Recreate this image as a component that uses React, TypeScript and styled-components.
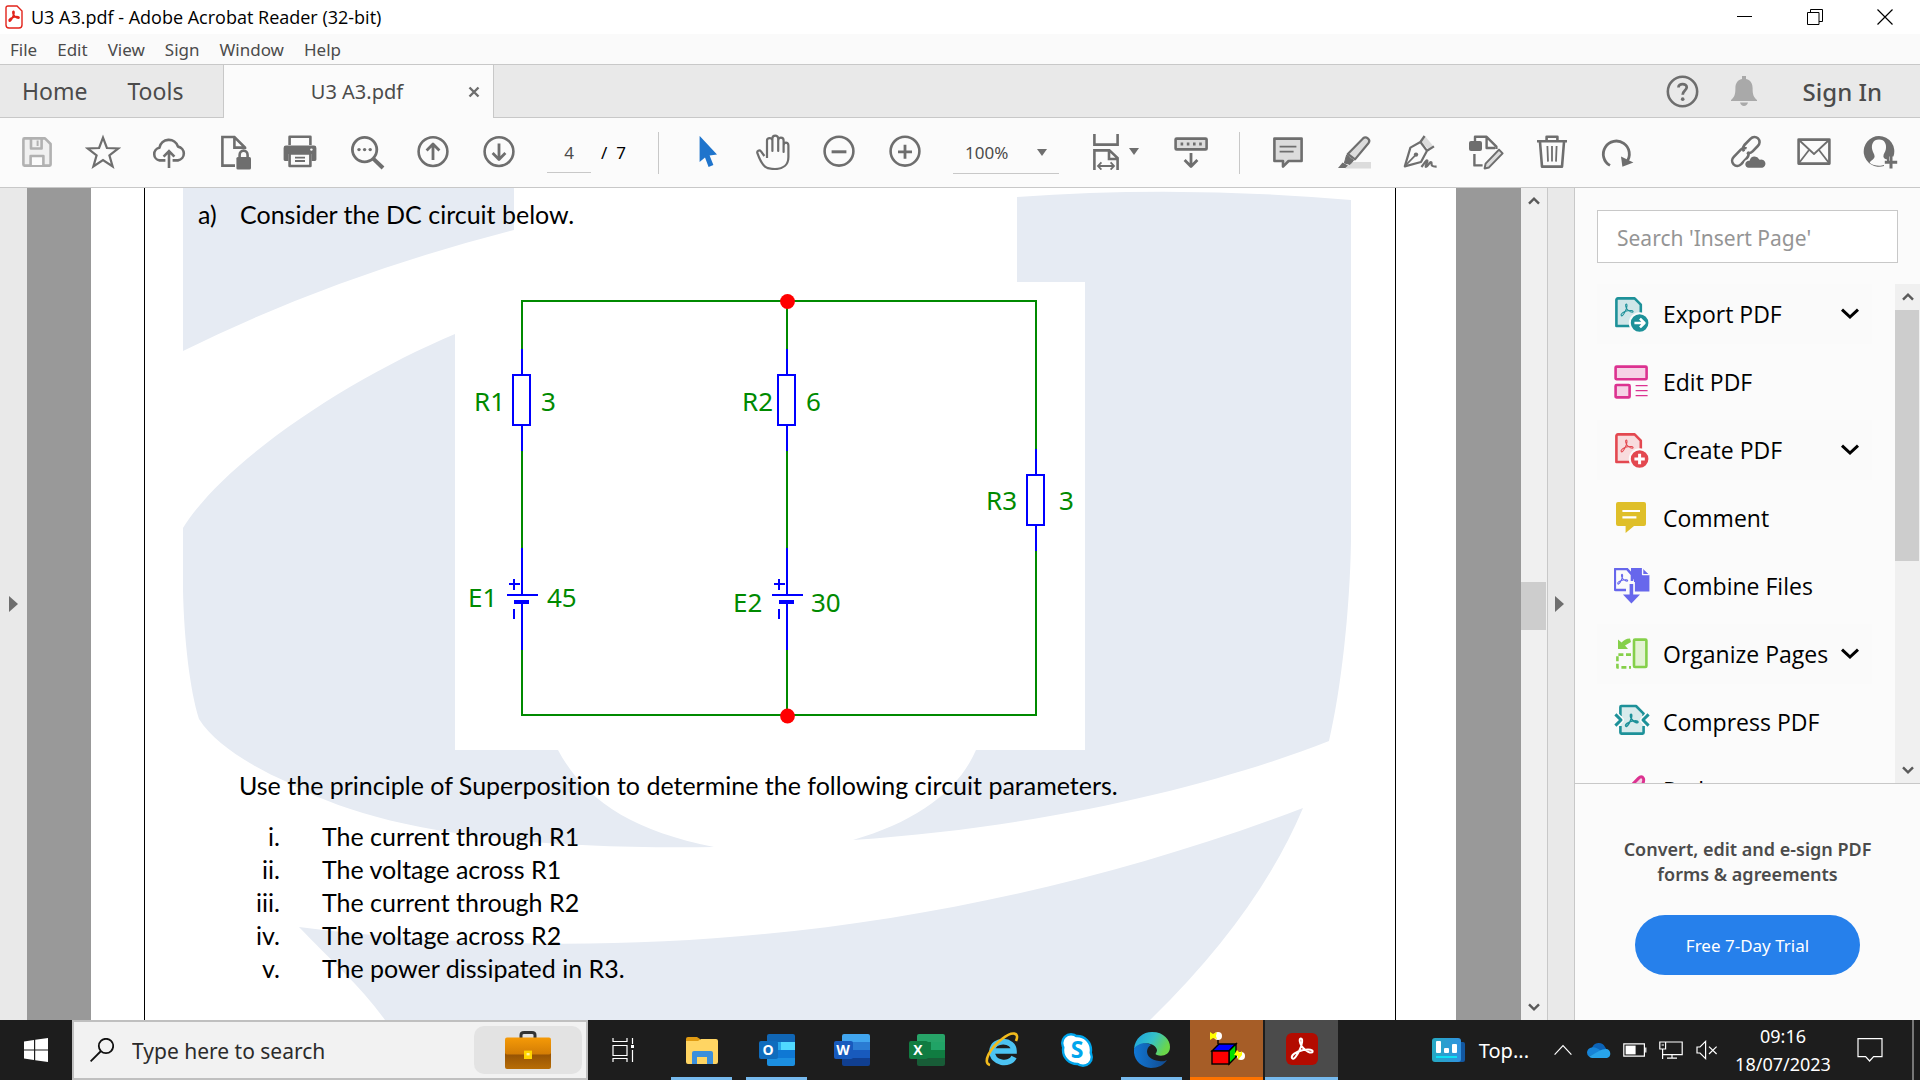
import React from "react";
import styled, { createGlobalStyle } from "styled-components";

const UI = `"Noto Sans", "Open Sans", sans-serif`;
const UI_NARROW = `"Open Sans", "Noto Sans", sans-serif`;
const DOC = `Lato, "Noto Sans", sans-serif`;
const INK = "#6e6e6e";
const LINE = "#c8c8c8";

const Global = createGlobalStyle`
  * { box-sizing: border-box; }
  body { margin: 0; font-family: ${UI}; color: #000; }
  button, input, select { font-family: inherit; color: inherit; margin: 0; }
  button { background: none; border: 0; padding: 0; cursor: pointer; }
  svg { display: block; flex: none; }
`;

const Desktop = styled.div`
  height: 100vh;
  display: flex;
  flex-direction: column;
  overflow: hidden;
  background: #fbfbfb;
`;

/* ---------- window chrome ---------- */
const TitleBar = styled.header`
  height: 34px;
  flex: none;
  display: flex;
  align-items: center;
  padding-left: 5px;
  background: #fff;
`;
const WindowTitle = styled.h1`
  margin: 0;
  padding-left: 8px;
  flex: 1;
  font-family: ${UI_NARROW};
  font-size: 18px;
  font-weight: 400;
`;
const WindowButton = styled.button`
  width: 70px;
  height: 34px;
  display: grid;
  place-items: center;
`;
const MenuBar = styled.nav`
  height: 31px;
  flex: none;
  display: flex;
  align-items: center;
  gap: 20px;
  padding: 0 10px;
  background: #fafafa;
  border-bottom: 1px solid ${LINE};
`;
const MenuItem = styled.button`
  font-size: 17px;
  color: #4b4b4b;
`;
const TabBar = styled.div`
  height: 53px;
  flex: none;
  display: flex;
  background: #e9e9e9;
  color: #4b4b4b;
`;
const HomeTabs = styled.div`
  width: 223px;
  display: flex;
  align-items: center;
  gap: 40px;
  padding-left: 22px;
  border-bottom: 1px solid ${LINE};
`;
const TabLink = styled.button`
  font-size: 23px;
`;
const ActiveTab = styled.div`
  width: 271px;
  display: flex;
  align-items: center;
  padding-right: 13px;
  background: #fbfbfb;
  border-left: 1px solid ${LINE};
  border-right: 1px solid ${LINE};
`;
const ActiveTabName = styled.span`
  flex: 1;
  padding-left: 22px;
  text-align: center;
  font-size: 20px;
`;
const Account = styled.div`
  flex: 1;
  display: flex;
  justify-content: flex-end;
  align-items: center;
  gap: 32px;
  padding-right: 38px;
  border-bottom: 1px solid ${LINE};
`;
const SignIn = styled.button`
  margin-left: 14px;
  font-size: 24px;
  font-weight: 500;
`;

/* ---------- toolbar ---------- */
const Toolbar = styled.div`
  height: 70px;
  flex: none;
  display: flex;
  align-items: center;
  padding: 0 7px 0 4px;
  border-bottom: 1px solid ${LINE};
  font-size: 17px;
`;
const Tool = styled.button`
  width: 66px;
  height: 60px;
  padding-bottom: 2px;
  display: flex;
  align-items: center;
  justify-content: center;
`;
const FitTool = styled(Tool)`
  width: 93px;
  padding-left: 27px;
  justify-content: flex-start;
  gap: 9px;
`;
const PageInput = styled.input`
  width: 44px;
  height: 40px;
  margin: 0 10px 0 15px;
  padding: 0;
  border: 0;
  border-bottom: 1px solid ${LINE};
  background: none;
  text-align: center;
  font-size: 17px;
  color: #4b4b4b;
`;
const PageTotal = styled.span`
  width: 42px;
  white-space: pre;
`;
const Rule = styled.span`
  width: 1px;
  height: 42px;
  margin: 0 15px;
  background: ${LINE};
`;
const ZoomBox = styled.label`
  width: 106px;
  height: 42px;
  margin: 0 6px 0 15px;
  display: flex;
  align-items: center;
  border-bottom: 1px solid ${LINE};
`;
const ZoomSelect = styled.select`
  appearance: none;
  flex: 1;
  padding: 0 0 0 12px;
  border: 0;
  background: none;
  font-size: 17px;
  color: #4b4b4b;
`;
const Caret = styled.span`
  border: 5px solid transparent;
  border-top: 7px solid ${INK};
  border-bottom: 0;
`;
const ZoomCaret = styled(Caret)`
  margin-right: 12px;
`;
const Spacer = styled.span`
  flex: 1;
`;

/* ---------- work area ---------- */
const Work = styled.main`
  flex: 1;
  min-height: 0;
  display: flex;
`;
const Strip = styled.button<{ $w: number }>`
  width: ${(p) => p.$w}px;
  flex: none;
  display: grid;
  place-items: center;
  background: #e9e9e9;
`;
const SideStrip = styled(Strip)`
  padding-right: 3px;
  border-left: 1px solid ${LINE};
  border-right: 1px solid ${LINE};
`;
const Pointer = styled.span`
  border: 8px solid transparent;
  border-left: 9px solid ${INK};
  border-right: 0;
`;
const Canvas = styled.section`
  flex: 1;
  min-width: 0;
  display: flex;
  padding: 0 65px 0 64px;
  background: #999;
`;
const Sheet = styled.article`
  position: relative;
  flex: 1;
  min-width: 0;
  overflow: hidden;
  padding: 0 60px 0 53px;
  background: #fff;
  font-family: ${DOC};
  font-size: 25px;
  font-variant-ligatures: none;
  line-height: 34px;
`;
const Watermark = styled.svg`
  position: absolute;
  left: 0;
  top: 0;
`;
const SheetBody = styled.div`
  position: relative;
  height: 100%;
  padding: 9px 0 0 53px;
  border-left: 1px solid #000;
  border-right: 1px solid #000;
`;
const Question = styled.p`
  margin: 0;
  display: flex;
`;
const QuestionMark = styled.span`
  width: 42px;
`;
const Figure = styled.figure`
  margin: 51px 0 18px 257px;
`;
const Prompt = styled.p`
  margin: 0 0 18px 41px;
`;
const Parts = styled.ol`
  margin: 0;
  padding: 0;
  list-style: none;
  line-height: 33px;
`;
const Part = styled.li`
  display: flex;
`;
const Numeral = styled.span`
  width: 82px;
  margin-right: 42px;
  text-align: right;
`;

const ScrollTrack = styled.div<{ $w: number }>`
  width: ${(p) => p.$w}px;
  flex: none;
  display: flex;
  flex-direction: column;
  background: #f0f0f0;
`;
const ScrollArrow = styled.button`
  height: 26px;
  flex: none;
  display: grid;
  place-items: center;
`;
const Thumb = styled.div<{ $h: number; $before: number }>`
  height: ${(p) => p.$h}px;
  margin: ${(p) => p.$before}px 1px auto 0;
  background: #cdcdcd;
`;

/* ---------- tool panel ---------- */
const Panel = styled.aside`
  width: 345px;
  flex: none;
  display: flex;
  flex-direction: column;
  background: #fbfbfb;
`;
const Search = styled.input`
  height: 53px;
  margin: 22px 22px 21px;
  padding: 2px 19px 0;
  border: 1px solid ${LINE};
  background: #fff;
  font-size: 21px;
  &::placeholder { color: #959595; opacity: 1; }
`;
const ToolList = styled.div`
  height: 500px;
  display: flex;
  border-bottom: 1px solid ${LINE};
`;
const ToolRows = styled.ul`
  flex: 1;
  margin: 0;
  padding: 0 23px 0 22px;
  display: flex;
  flex-direction: column;
  gap: 8px;
  list-style: none;
  overflow: hidden;
`;
const ToolRow = styled.button<{ $open?: boolean }>`
  width: 100%;
  height: 60px;
  display: flex;
  align-items: center;
  padding: 0 12px 0 17px;
  background: ${(p) => (p.$open ? "#fafafa" : "none")};
  font-family: ${UI_NARROW};
  font-size: 23px;
  text-align: left;
`;
const ToolName = styled.span`
  flex: 1;
  padding-left: 13px;
  white-space: nowrap;
`;
const Promo = styled.section`
  flex: 1;
  display: flex;
  flex-direction: column;
  align-items: center;
  padding-top: 53px;
  gap: 28px;
`;
const PromoText = styled.p`
  margin: 0;
  width: 300px;
  text-align: center;
  font-size: 18px;
  font-weight: 600;
  line-height: 25px;
  color: #4b4b4b;
`;
const Trial = styled.button`
  width: 225px;
  height: 60px;
  border-radius: 30px;
  background: #2680eb;
  color: #fff;
  font-size: 17px;
`;

/* ---------- taskbar ---------- */
const Taskbar = styled.footer`
  height: 60px;
  flex: none;
  display: flex;
  background: #1d1d1d;
  color: #fff;
`;
const TaskButton = styled.button`
  width: 72px;
  height: 60px;
  display: grid;
  place-items: center;
`;
const TaskSearch = styled.label`
  width: 516px;
  display: flex;
  align-items: center;
  padding: 0 4px 0 16px;
  border: 2px solid #c0c0c0;
  background: #f2f2f2;
`;
const TaskInput = styled.input`
  flex: 1;
  min-width: 0;
  padding: 2px 0 0 18px;
  border: 0;
  background: none;
  font-size: 21px;
  &::placeholder { color: #2b2b2b; opacity: 1; }
`;
const SearchHighlight = styled.span`
  width: 108px;
  height: 48px;
  display: grid;
  place-items: center;
  border-radius: 10px;
  background: #e3e3e3;
`;
const Apps = styled.div`
  display: flex;
  gap: 2px;
  padding-left: 5px;
`;
const Pinned = styled.button<{ $bg?: string; $bar?: string; $full?: boolean }>`
  width: 73px;
  height: 60px;
  display: flex;
  flex-direction: column;
  align-items: center;
  justify-content: flex-end;
  background: ${(p) => p.$bg ?? "none"};
  &::after {
    content: "";
    width: ${(p) => (p.$full ? "100%" : "61px")};
    height: 3px;
    margin-top: 9px;
    background: ${(p) => p.$bar ?? "transparent"};
  }
`;
const Tray = styled.div`
  flex: 1;
  display: flex;
  justify-content: flex-end;
  align-items: center;
`;
const News = styled.button`
  display: flex;
  align-items: center;
  gap: 13px;
  margin-right: 16px;
  font-size: 20px;
  color: #fff;
`;
const TrayButton = styled.button`
  width: 36px;
  height: 60px;
  display: grid;
  place-items: center;
`;
const Clock = styled.button`
  width: 114px;
  margin: 0 12px 0 1px;
  font-size: 18px;
  line-height: 28px;
  color: #fff;
`;
const ShowDesktop = styled.button`
  width: 8px;
  height: 60px;
  margin-left: 24px;
  border-left: 2px solid #777;
`;

/* ---------- icons ---------- */
const Icon = ({ children, size = 36 }: { children: React.ReactNode; size?: number }) => (
  <svg width={size} height={size} viewBox="0 0 36 36" fill="none" stroke={INK} strokeWidth="2.6" strokeLinejoin="round" aria-hidden="true">
    {children}
  </svg>
);

const SWIRL =
  "M8 27 C6 24 12 20 19 18.6 C25 17.4 29 18.4 28.4 20.4 C27.6 22.6 21 20 17.6 15 C15.6 12 14.6 7.4 16.6 7 C19 6.8 18 13 15.4 18.6 C13 24 9.6 28.6 8 27Z";

const icons = {
  save: (
    <Icon>
      <g stroke="#b1b1b1">
        <path d="M4.4 5.4 Q4.4 4.4 5.4 4.4 H26 L31.6 10 V30.6 Q31.6 31.6 30.6 31.6 H5.4 Q4.4 31.6 4.4 30.6Z" fill="#f0f0f0" />
        <path d="M12 5 V14.5 H22.6 V5" />
        <path d="M18.6 6.5 V12" strokeWidth="2" />
        <path d="M11.6 31 V22 H24.4 V31" fill="#fbfbfb" />
      </g>
    </Icon>
  ),
  star: (
    <Icon>
      <path d="M18 3.6 L21.9 14 L33.4 14.4 L24.4 21.4 L27.6 32.4 L18 26 L8.4 32.4 L11.6 21.4 L2.6 14.4 L14.1 14Z" strokeWidth="2.2" strokeLinejoin="miter" />
    </Icon>
  ),
  cloud: (
    <Icon>
      <path d="M14.4 26.4 H8.6 A6.4 6.4 0 0 1 8.4 13.8 A9.6 9.6 0 0 1 27 12.6 A7 7 0 0 1 27 26.4 H21.6" />
      <path d="M18 34 V18 M12.6 22.6 L18 17 L23.4 22.6" strokeLinejoin="miter" />
    </Icon>
  ),
  lockDoc: (
    <Icon>
      <path d="M18 31.6 H5.4 V3 H17.4 L28 13.6 V15 M17.4 3 V13.6 H27" strokeLinejoin="miter" />
      <path d="M22.6 23 V21 A4 4.4 0 0 1 30.6 21 V23" />
      <rect x="19.4" y="23" width="14.6" height="12.4" rx="1.5" fill={INK} stroke="none" />
    </Icon>
  ),
  print: (
    <Icon>
      <path d="M6.6 11 V2.8 H27.4 V11" />
      <path d="M3 11.6 H31 Q33.4 11.6 33.4 14 V25.6 Q33.4 27 32 27 H28.6 V20 H5.4 V27 H2 Q.6 27 .6 25.6 V14 Q.6 11.6 3 11.6Z" fill={INK} stroke="none" />
      <path d="M6.6 19.4 H27.4 V32 H6.6Z" fill="#fbfbfb" />
      <path d="M12 23.6 H22 M12 27 H22" strokeWidth="1.8" />
      <circle cx="28.4" cy="15.6" r="1.2" fill="#fbfbfb" stroke="none" />
    </Icon>
  ),
  find: (
    <Icon>
      <circle cx="15.6" cy="15.6" r="12.2" strokeWidth="2.8" />
      <path d="M24.2 24.6 L34 34" strokeWidth="4" />
      <g fill={INK} stroke="none"><circle cx="10" cy="15.6" r="1.7" /><circle cx="15.6" cy="15.6" r="1.7" /><circle cx="21.2" cy="15.6" r="1.7" /></g>
    </Icon>
  ),
  up: (
    <Icon>
      <circle cx="18" cy="17.6" r="14.4" />
      <path d="M18 26 V10.4 M11.6 16.4 L18 10 L24.4 16.4" strokeWidth="2.8" />
    </Icon>
  ),
  down: (
    <Icon>
      <circle cx="18" cy="17.6" r="14.4" />
      <path d="M18 9.4 V25 M11.6 19 L18 25.4 L24.4 19" strokeWidth="2.8" />
    </Icon>
  ),
  select: (
    <Icon>
      <path d="M10.6 2.4 Q10.6 1.6 11.2 2.4 L28 20.6 L20.6 21.6 L24.4 31 L19.6 33 L16 23.4 L10.6 28Z" fill="#1f74cc" stroke="none" />
    </Icon>
  ),
  hand: (
    <Icon>
      <path d="M9.4 22 L6 17.4 C4.4 15.4 1.6 16.8 2.4 19.2 C4.4 25 7 30 10 32.6 C12.6 34.8 16 35 20 35 C28 35 33.4 31 33.4 23 V11.4 C33.4 7.8 28.6 7.8 28.6 11.4 V18 V6.4 C28.6 2.8 23.2 2.8 23.2 6.4 V17 V4.4 C23.2 .8 17.4 .8 17.4 4.4 V17 V6.6 C17.4 3.2 12 3.2 12 6.6 L12 24" strokeWidth="2.2" />
    </Icon>
  ),
  minus: (
    <Icon>
      <circle cx="18" cy="17.2" r="14.4" />
      <path d="M10.6 17.8 H25.4" strokeWidth="3" />
    </Icon>
  ),
  plus: (
    <Icon>
      <circle cx="18" cy="17.2" r="14.4" />
      <path d="M11 17.8 H25 M18 10.8 V24.8" strokeWidth="2.8" />
    </Icon>
  ),
  fit: (
    <svg width="28" height="36" viewBox="0 0 28 36" fill="none" stroke={INK} strokeWidth="2.6" aria-hidden="true">
      <path d="M2.4 0 V10.6 H25.6 V0" />
      <path d="M2.4 36 V16.4 H17.4 L25.6 24 V36 M17 16.4 V25 H25" />
      <path d="M6 32 H22 M9.4 28.4 L6 32 L9.4 35.6 M18.6 28.4 L22 32 L18.6 35.6" strokeWidth="1.8" />
    </svg>
  ),
  keyboard: (
    <Icon>
      <rect x="2.6" y="4.6" width="31" height="10.8" rx="1" fill="#dcdcdc" />
      <path d="M7.6 10 H29.6" strokeWidth="3" strokeDasharray="2.6 3.6" />
      <path d="M18 19 V31.6 M11.6 26 L18 32.4 L24.4 26" strokeWidth="2.8" />
    </Icon>
  ),
  note: (
    <Icon>
      <path d="M4.4 4.6 H31.6 V27 H18.6 L13 32.6 V27 H4.4Z" fill="#dcdcdc" />
      <path d="M9.6 12.6 H26.4 M9.6 17.6 H23.6" strokeWidth="1.8" />
    </Icon>
  ),
  marker: (
    <Icon>
      <path d="M16 28 H35 V34.6 H9Z" fill="#dcdcdc" stroke="none" />
      <path d="M27 4.4 C30 1.6 35 5.4 32.6 9 L19 25.4 L11.8 20Z" fill="#dcdcdc" strokeWidth="2.2" />
      <path d="M10.6 21 L17.6 26.4 L14 30.4 L8.4 29Z" fill={INK} strokeWidth="1" />
      <path d="M6.6 28.4 L12 31.4 L9.4 34 H2Z" fill={INK} stroke="none" />
    </Icon>
  ),
  pen: (
    <Icon>
      <path d="M23 2 L31.6 12.4 L26.4 15.6 L18.4 6.4Z" fill="#dcdcdc" stroke="none" />
      <path d="M22.6 2 L18.4 8 L8.4 13.6 L2.8 32.4 L19 28 L25 16.8 L32 12.4 M18.4 8 L25 16.8" strokeWidth="2.2" />
      <path d="M3 32 L13 21.6" strokeWidth="1.8" />
      <circle cx="14" cy="20.6" r="2.2" fill={INK} stroke="none" />
      <path d="M19.4 33 C22 30 24 25.6 25.4 26.6 C26 28 22.6 32.6 24 33 C26 33 27.6 27 29.4 28.4 C30 30 28 32.8 34.6 32.6" strokeWidth="2.2" />
    </Icon>
  ),
  editDoc: (
    <Icon>
      <path d="M7 7 V2.8 H18.6 L28.4 12.6 V15 M18.6 3 V14 H27" strokeWidth="2.4" />
      <rect x="1" y="7" width="13" height="10" rx="2" fill={INK} stroke="none" />
      <path d="M6.4 20 V31.4 H14.6" strokeWidth="2.4" />
      <path d="M31 15.6 L34.6 19.4 L21 33.4 L16.6 34.4 L17.6 29.6Z" fill="#dcdcdc" strokeWidth="2" />
    </Icon>
  ),
  trash: (
    <Icon>
      <path d="M3 7.2 H33 M12.6 6.6 V2.8 H23.4 V6.6" />
      <path d="M6 8 L8 32.6 H28 L30 8" />
      <path d="M13.4 12 L14 27.6 M18 12 V27.6 M22.6 12 L22 27.6" strokeWidth="1.8" />
    </Icon>
  ),
  redo: (
    <Icon>
      <path d="M10 31.4 A13 13 0 1 1 26.6 28" strokeWidth="2.8" />
      <path d="M21 22.4 L33.4 28.6 L22.4 32.8Z" fill={INK} stroke="none" />
    </Icon>
  ),
  link: (
    <Icon>
      <path d="M14 17.4 C12.4 15 12.800 13 14.400 11 L20.400 4.800 C22.800 2.400 26 2.400 28 4.400 C30.200 6.600 30 9.800 27.800 12 L22.600 17.400 C20.800 19.200 18.800 19.400 17 18.600" />
      <path d="M16.600 14.400 C14.600 13.600 12.600 13.800 10.800 15.600 L3.800 22.800 C1.600 25 1.600 28.200 3.600 30.400 C5.800 32.600 9 32.400 11.200 30.200 L17 24 C18.800 22 19 20 17.800 18" />
      <path d="M18.600 34.600 A4.200 4.200 0 0 1 19 26 A5.800 5.800 0 0 1 29.800 25 A4.800 4.800 0 0 1 32.600 34.600Z" fill={INK} stroke="#fbfbfb" strokeWidth="1.600" />
    </Icon>
  ),
  mail: (
    <Icon>
      <rect x="2.6" y="5.6" width="30.8" height="24" />
      <path d="M3 6 L18 20 L33 6 M3 29 L13 16 M33 29 L23 16" strokeWidth="1.8" />
    </Icon>
  ),
  person: (
    <Icon>
      <path d="M17 2 A15.4 15.4 0 1 0 22 32 V28.4 H27 V22.6 H31.400 A15.4 15.4 0 0 0 17 2Z" fill={INK} stroke="none" />
      <path d="M17 5.6 C23 5.6 24.8 10.6 23.8 15.6 C23.2 18.4 21.4 20 21.4 22.4 C21.4 24 24 25.4 25 25.6 V28 L22 31 C18.6 32.2 11 32 8 29 C7 27 12.6 25.6 12.6 22.4 C12.6 20 10.800 18.6 10.2 15.6 C9.200 10.6 11 5.6 17 5.6Z" fill="#fbfbfb" stroke="none" />
      <path d="M29 22 V34.400 M22.800 28.2 H35.200" strokeWidth="3" />
    </Icon>
  ),
};

const Chevron = ({ up }: { up?: boolean }) => (
  <svg width="12" height="12" viewBox="0 0 12 12" fill="none" stroke="#5a5a5a" strokeWidth="2.4" aria-hidden="true">
    <path d={up ? "M1 8.6 L6 3.6 L11 8.6" : "M1 3.4 L6 8.4 L11 3.4"} />
  </svg>
);

const FoldDoc = ({ color, tint, badge }: { color: string; tint: string; badge: React.ReactNode }) => (
  <Icon>
    <path d="M4 2.4 H20.6 L26.8 8.6 V30 H2.4 V4 Q2.4 2.4 4 2.4Z" fill={tint} stroke={color} strokeWidth="2.6" />
    <g transform="translate(2.6 4) scale(.58)"><path d={SWIRL} stroke={color} strokeWidth="1.8" /></g>
    <circle cx="25.6" cy="27" r="9.8" fill={color} stroke="#fbfbfb" strokeWidth="2" />
    {badge}
  </Icon>
);

const tools = [
  {
    name: "Export PDF", open: true,
    icon: <FoldDoc color="#1d9199" tint="#d0e6e8" badge={<path d="M20.4 27 H30 M26 22.6 L30.4 27 L26 31.4" stroke="#fff" strokeWidth="2.6" />} />,
  },
  {
    name: "Edit PDF",
    icon: (
      <Icon>
        <g stroke="#dc3290" fill="#f6d2e6">
          <rect x="1.6" y="2.6" width="31" height="12.6" rx="1" />
          <rect x="1.6" y="21" width="14" height="12.4" rx="1" />
          <path d="M21.6 21.6 H33.6 M21.6 26.6 H33.6 M21.6 31.6 H33.6" strokeWidth="1.4" />
        </g>
      </Icon>
    ),
  },
  {
    name: "Create PDF", open: true,
    icon: <FoldDoc color="#e34850" tint="#f8dcde" badge={<path d="M20.4 27 H30.8 M25.6 21.8 V32.2" stroke="#fff" strokeWidth="3" />} />,
  },
  {
    name: "Comment",
    icon: (
      <Icon>
        <path d="M4 2 H30 Q32 2 32 4 V24 Q32 26 30 26 H20 L11.6 33 V26 H4 Q2 26 2 24 V4 Q2 2 4 2Z" fill="#dfbf29" stroke="none" />
        <path d="M8.4 11 H26 M8.4 17.4 H22.4" stroke="#fff" strokeWidth="2.2" />
      </Icon>
    ),
  },
  {
    name: "Combine Files",
    icon: (
      <Icon>
        <path d="M17 0 H28 L35.4 7 V23.6 H20 V12 L17 8Z" fill="#6767ec" stroke="none" />
        <path d="M28.6 0 V6.6 H35.4" stroke="#fbfbfb" strokeWidth="1.4" />
        <path d="M12 22 H1.6 Q.8 22 .8 21 V2 Q.8 1 1.8 1 H13 L18 6.6 V13" stroke="#6767ec" fill="#fbfbfb" />
        <g transform="translate(0 3) scale(.48)"><path d={SWIRL} stroke="#6767ec" strokeWidth="2.2" /></g>
        <path d="M17.4 14 V28" stroke="#fbfbfb" strokeWidth="7" />
        <path d="M17.4 16 V28" stroke="#6767ec" strokeWidth="3.6" />
        <path d="M9 26.6 H26 L17.4 35.6Z" fill="#6767ec" stroke="none" />
      </Icon>
    ),
  },
  {
    name: "Organize Pages", open: true,
    icon: (
      <Icon>
        <rect x="20" y="3.6" width="12.4" height="27.4" rx="1" fill="#e3f3d3" stroke="#85d04a" />
        <path d="M17 18.6 H3.4 V31.4 H17" stroke="#85d04a" strokeDasharray="5 2.6" />
        <path d="M4 3.4 L4 13 H14 L11 9.6 L17 6 L16 2.6 C12 2.6 9.6 4.4 7.6 6.6Z" fill="#85d04a" stroke="none" />
      </Icon>
    ),
  },
  {
    name: "Compress PDF",
    icon: (
      <Icon>
        <path d="M6.4 12 V3 Q6.4 2 7.4 2 H22 L29.6 9.6 V12 M6.4 22 V28.6 Q6.4 29.6 7.4 29.6 H28.6 Q29.6 29.6 29.6 28.6 V22" fill="#d8ebec" stroke="#1d9199" />
        <path d="M6.4 12 H29.6 V22 H6.4Z" fill="#d8ebec" stroke="none" />
        <g transform="translate(7 6) scale(.6)"><path d={SWIRL} stroke="#1d9199" strokeWidth="2.4" /></g>
        <path d="M1.4 10.4 L7 16 L1.4 21.6 M34.6 10.4 L29 16 L34.6 21.6" stroke="#fbfbfb" strokeWidth="6" />
        <path d="M1.4 10.4 L7 16 L1.4 21.6 M34.6 10.4 L29 16 L34.6 21.6" stroke="#1d9199" strokeWidth="3" />
      </Icon>
    ),
  },
  {
    name: "Redact",
    icon: (
      <Icon>
        <path d="M14 17 L24.400 6.400 Q27.600 3.200 29.400 6.400 Q30.400 8.400 28 14 L20 24Z" fill="#f6d2e6" stroke="#dc3290" strokeWidth="3" />
      </Icon>
    ),
  },
];

/* ---------- circuit ---------- */
const Resistor = ({ x, y }: { x: number; y: number }) => (
  <g stroke="#00f" strokeWidth="2" fill="#fff">
    <path d={`M${x} ${y} V${y + 102}`} />
    <rect x={x - 9} y={y + 26} width="17" height="50" />
  </g>
);
const Cell = ({ x, y }: { x: number; y: number }) => (
  <g stroke="#00f" strokeWidth="2" fill="none">
    <path d={`M${x} ${y + 47} V${y + 54}`} stroke="#fff" strokeWidth="4" />
    <path d={`M${x} ${y} V${y + 47} M${x} ${y + 55} V${y + 102} M${x - 15} ${y + 47} h31`} />
    <path d={`M${x - 8} ${y + 54} h15`} strokeWidth="4" />
    <path d={`M${x - 13} ${y + 36} h11 M${x - 8} ${y + 31} v11 M${x - 8} ${y + 61} v10`} />
  </g>
);
const labels: [string, number, number][] = [
  ["R1", 474, 411], ["3", 541, 411], ["R2", 742, 411], ["6", 806, 411],
  ["R3", 986, 510], ["3", 1059, 510], ["E1", 468, 607], ["45", 547, 607],
  ["E2", 733, 612], ["30", 811, 612],
];
const Circuit = () => (
  <svg width="630" height="468" viewBox="455 282 630 468" role="img" aria-label="DC circuit">
    <rect x="455" y="282" width="630" height="468" fill="#fff" />
    <path d="M522 301 H1036 V715 H522Z M787 301 V715" fill="none" stroke="#008a00" strokeWidth="2" />
    <Resistor x={522} y={349} />
    <Resistor x={787} y={349} />
    <Resistor x={1036} y={449} />
    <Cell x={522} y={548} />
    <Cell x={787} y={548} />
    <circle cx="787.5" cy="301.5" r="7.4" fill="#f00" />
    <circle cx="787.5" cy="716" r="7.4" fill="#f00" />
    <g fill="#008a00" fontFamily='"Noto Sans", sans-serif' fontSize="26">
      {labels.map(([t, x, y]) => (
        <text key={t + x} x={x} y={y}>{t}</text>
      ))}
    </g>
  </svg>
);

const SheetMark = () => (
  <Watermark width="1365" height="832" viewBox="91 188 1365 832" fill="#e6ebf3" aria-hidden="true">
    <path d="M183 188 H514 V230 Q334 276 183 351Z" />
    <path d="M455 334 C350 378 225 460 183 528 V590 C184 640 190 690 199 719 C215 745 255 768 287 782 C360 822 480 850 714 847 C630 830 585 800 558 750 L600 700 V334Z" />
    <path d="M1017 197 Q1180 185 1351 200 V540 C1350 610 1341 690 1329 741 C1230 780 1060 826 853 840 C915 822 958 792 976 750 V282 H1017Z" />
    <path d="M1303 808 Q1258 915 1150 1020 H385 C360 985 330 960 299 927 C640 970 980 930 1303 808Z" />
  </Watermark>
);

/* ---------- taskbar artwork ---------- */
const OfficeIcon = ({ letter, c }: { letter: string; c: string[] }) => (
  <svg width="36" height="36" viewBox="0 0 36 36" aria-hidden="true">
    <path d="M8 10 V4 Q8 2 10 2 H34 Q36 2 36 4 V10Z" fill={c[0]} />
    <rect x="22" y="10" width="14" height="8" fill={c[1]} />
    <rect x="8" y="10" width="14" height="8" fill={c[2]} />
    <rect x="8" y="18" width="28" height="8" fill={c[3]} />
    <path d="M8 26 H36 V32 Q36 34 34 34 H10 Q8 34 8 32Z" fill={c[4]} />
    <rect x="0" y="9" width="19" height="18" rx="2" fill={c[5]} />
    <text x="9" y="23" textAnchor="middle" fontSize="14" fontWeight="700" fontFamily='"Open Sans", sans-serif' fill="#fff">{letter}</text>
  </svg>
);

const art = {
  explorer: (
    <svg width="34" height="36" viewBox="0 0 34 36" aria-hidden="true">
      <path d="M1 7 Q1 5 3 5 H12 L15 7 V11 H1Z" fill="#e09b13" />
      <path d="M1 9 H13 L16 7 H31 Q33 7 33 9 V30 Q33 32 31 32 H3 Q1 32 1 30Z" fill="#ffd563" />
      <path d="M7 21 Q7 19 9 19 H26 Q28 19 28 21 V32 H22 V25 H12 V32 H7Z" fill="#3b8fdc" />
    </svg>
  ),
  ie: (
    <svg width="36" height="36" viewBox="0 0 36 36" fill="none" aria-hidden="true">
      <path d="M9 19 H30 C30 7 9 6 8 19 C8 32 26 34 30 25" stroke="#4cc3f2" strokeWidth="5.600" />
      <path d="M6 33 C-2 31 6 16 18 7 C28 -1 36 0 32 9" stroke="#f2bb1d" strokeWidth="2.600" />
    </svg>
  ),
  skype: (
    <svg width="34" height="36" viewBox="0 0 34 36" aria-hidden="true">
      <circle cx="11" cy="11" r="10" fill="#00a5ec" /><circle cx="23" cy="25" r="10" fill="#00a5ec" />
      <circle cx="17" cy="18" r="14" fill="#fff" stroke="#00a5ec" strokeWidth="2.400" />
      <circle cx="11" cy="11" r="7.600" fill="#fff" /><circle cx="23" cy="25" r="7.600" fill="#fff" />
      <text x="17" y="26" textAnchor="middle" fontSize="23" fontWeight="700" fontFamily='"Open Sans", sans-serif' fill="#00a5ec">S</text>
    </svg>
  ),
  edge: (
    <svg width="36" height="36" viewBox="0 0 36 36" aria-hidden="true">
      <defs>
        <linearGradient id="edgeTop" x1="0" x2="1" y1="0" y2=".4"><stop offset="0" stopColor="#1a9fe0" /><stop offset=".55" stopColor="#35c1c9" /><stop offset="1" stopColor="#6ad64a" /></linearGradient>
        <linearGradient id="edgeLow" x1="0" x2="1"><stop offset="0" stopColor="#1177d4" /><stop offset="1" stopColor="#124a8e" /></linearGradient>
      </defs>
      <path d="M0 17 C1 6 9 0 18 0 C30 0 36 8 36 15 C36 23 28 25 23 23 C20 22 23 21 23 18 C22 11 8 8 0 17Z" fill="url(#edgeTop)" />
      <path d="M0 17 C3 11 13 10 17 13 C10 17 12 28 25 29 C29 29.600 31 29 33 28 C30 33 24 36 17 36 C6 35 -1 27 0 17Z" fill="url(#edgeLow)" />
    </svg>
  ),
  cube: (
    <svg width="36" height="36" viewBox="0 0 36 36" stroke="#000" strokeWidth="1.4" aria-hidden="true">
      <path d="M3 19 L10 12 H27 L20 19Z" fill="#00f" /><path d="M20 19 L27 12 V25 L20 32Z" fill="#0d0" />
      <rect x="3" y="19" width="17" height="13" fill="#f00" />
      <path d="M9 12 V6 M26 24 H30" />
      <circle cx="9" cy="4" r="4" fill="#fff" stroke="none" /><circle cx="32" cy="24" r="4" fill="#fff" stroke="none" />
      <path d="M1 0 L4 2 L8 0 L7 4 L8 7 L4 6 L1 8Z M28 18 L31 21 L33 19 V23 L29 28 L29 24 L25 23Z" fill="#ff0" stroke="none" />
    </svg>
  ),
  acrobat: (
    <svg width="34" height="36" viewBox="0 0 34 36" fill="none" aria-hidden="true">
      <rect x="1" y="1" width="32" height="32" rx="6" fill="#b30b00" />
      <g transform="translate(-.8 -.6)"><path d={SWIRL} stroke="#fff" strokeWidth="2" /></g>
    </svg>
  ),
};

const pinned: { name: string; icon: React.ReactNode; bar?: string; bg?: string; full?: boolean }[] = [
  { name: "File Explorer", icon: art.explorer, bar: "#76b9ed" },
  { name: "Outlook", icon: <OfficeIcon letter="O" c={["#1066b5", "#50d9ff", "#28a8ea", "#0f78d4", "#1c8fe0", "#0f6cbd"]} />, bar: "#76b9ed" },
  { name: "Word", icon: <OfficeIcon letter="W" c={["#41a5ee", "#2b7cd3", "#2b7cd3", "#185abd", "#103f91", "#185abd"]} /> },
  { name: "Excel", icon: <OfficeIcon letter="X" c={["#27a468", "#21a366", "#107c41", "#107c41", "#185c37", "#107c41"]} /> },
  { name: "Internet Explorer", icon: art.ie },
  { name: "Skype", icon: art.skype },
  { name: "Edge", icon: art.edge, bar: "#76b9ed" },
  { name: "Circuit Wizard", icon: art.cube, bar: "#ff7300", bg: "#a65d27", full: true },
  { name: "Acrobat Reader", icon: art.acrobat, bar: "#76b9ed", bg: "#4b4b4b", full: true },
];

const TrayIcon = ({ children, w = 24, h = 24 }: { children: React.ReactNode; w?: number; h?: number }) => (
  <svg width={w} height={h} viewBox={`0 0 ${w} ${h}`} fill="none" stroke="#fff" strokeWidth="1.2" aria-hidden="true">{children}</svg>
);

const T = ({ label, icon }: { label: string; icon: React.ReactNode }) => <Tool aria-label={label}>{icon}</Tool>;

export default function App() {
  return (
    <Desktop>
      <Global />
      <TitleBar>
        <svg width="18" height="24" viewBox="0 0 18 24" fill="none" stroke="#e2231a" strokeWidth="1.4" aria-hidden="true">
          <path d="M3 1 H12 L17 6 V20 Q17 23 14 23 H4 Q1 23 1 20 V3 Q1 1 3 1Z" />
          <g transform="translate(.4 3) scale(.48)"><path d={SWIRL} strokeWidth="3.4" /></g>
        </svg>
        <WindowTitle>U3 A3.pdf - Adobe Acrobat Reader (32-bit)</WindowTitle>
        <WindowButton aria-label="Minimise">
          <svg width="16" height="16" viewBox="0 0 16 16" stroke="#000"><path d="M0 7.5 H15" /></svg>
        </WindowButton>
        <WindowButton aria-label="Restore">
          <svg width="16" height="16" viewBox="0 0 16 16" fill="none" stroke="#000"><path d="M.5 3.5 H12 V15.5 H.5Z M3.5 3.5 V.5 H15.5 V12.5 H12" /></svg>
        </WindowButton>
        <WindowButton aria-label="Close">
          <svg width="16" height="16" viewBox="0 0 16 16" stroke="#000" strokeWidth="1.2"><path d="M.5 .5 L15.5 15.5 M15.5 .5 L.5 15.5" /></svg>
        </WindowButton>
      </TitleBar>
      <MenuBar>
        {["File", "Edit", "View", "Sign", "Window", "Help"].map((m) => <MenuItem key={m}>{m}</MenuItem>)}
      </MenuBar>
      <TabBar>
        <HomeTabs>
          <TabLink>Home</TabLink>
          <TabLink>Tools</TabLink>
        </HomeTabs>
        <ActiveTab>
          <ActiveTabName>U3 A3.pdf</ActiveTabName>
          <button aria-label="Close tab">
            <svg width="12" height="12" viewBox="0 0 12 12" stroke={INK} strokeWidth="2.4"><path d="M1.5 1.5 L10.5 10.5 M10.5 1.5 L1.5 10.5" /></svg>
          </button>
        </ActiveTab>
        <Account>
          <button aria-label="Help">
            <Icon size={33}>
              <circle cx="18" cy="18" r="16" strokeWidth="2.8" />
              <path d="M13.6 13.6 C13.6 8.6 22.6 8.6 22.6 13.4 C22.6 17 18.2 17 18.2 21.6" strokeWidth="3" />
              <circle cx="18.2" cy="26.4" r="2" fill={INK} stroke="none" />
            </Icon>
          </button>
          <button aria-label="Notifications">
            <svg width="26" height="30" viewBox="0 0 26 30" fill="#a9a9a9" aria-hidden="true">
              <path d="M11 0 H15 V3 C20 4 21.6 8 21.6 12 C21.6 19 22.6 21 26 24 V25 H0 V24 C3.4 21 4.4 19 4.4 12 C4.4 8 6 4 11 3Z M9 26.6 H17 Q16 30 13 30 Q10 30 9 26.6Z" />
            </svg>
          </button>
          <SignIn>Sign In</SignIn>
        </Account>
      </TabBar>
      <Toolbar>
        <T label="Save" icon={icons.save} />
        <T label="Star" icon={icons.star} />
        <T label="Upload" icon={icons.cloud} />
        <T label="Protect" icon={icons.lockDoc} />
        <T label="Print" icon={icons.print} />
        <T label="Find" icon={icons.find} />
        <T label="Previous page" icon={icons.up} />
        <T label="Next page" icon={icons.down} />
        <PageInput aria-label="Page number" defaultValue="4" />
        <PageTotal>{"/  7"}</PageTotal>
        <Rule />
        <T label="Select" icon={icons.select} />
        <T label="Pan" icon={icons.hand} />
        <T label="Zoom out" icon={icons.minus} />
        <T label="Zoom in" icon={icons.plus} />
        <ZoomBox>
          <ZoomSelect aria-label="Zoom level" defaultValue="100%"><option>100%</option></ZoomSelect>
          <ZoomCaret />
        </ZoomBox>
        <FitTool aria-label="Page fit">{icons.fit}<Caret /></FitTool>
        <T label="Scrolling" icon={icons.keyboard} />
        <Rule />
        <T label="Add note" icon={icons.note} />
        <T label="Highlight" icon={icons.marker} />
        <T label="Sign" icon={icons.pen} />
        <T label="Stamp" icon={icons.editDoc} />
        <T label="Delete" icon={icons.trash} />
        <T label="Rotate" icon={icons.redo} />
        <Spacer />
        <T label="Share link" icon={icons.link} />
        <T label="Email" icon={icons.mail} />
        <T label="Invite" icon={icons.person} />
      </Toolbar>
      <Work>
        <Strip $w={27} aria-label="Show navigation"><Pointer /></Strip>
        <Canvas>
          <Sheet>
            <SheetMark />
            <SheetBody>
              <Question><QuestionMark>a)</QuestionMark>Consider the DC circuit below.</Question>
              <Figure><Circuit /></Figure>
              <Prompt>Use the principle of Superposition to determine the following circuit parameters.</Prompt>
              <Parts>
                {[
                  ["i.", "The current through R1"],
                  ["ii.", "The voltage across R1"],
                  ["iii.", "The current through R2"],
                  ["iv.", "The voltage across R2"],
                  ["v.", "The power dissipated in R3."],
                ].map(([n, t]) => <Part key={n}><Numeral>{n}</Numeral>{t}</Part>)}
              </Parts>
            </SheetBody>
          </Sheet>
        </Canvas>
        <ScrollTrack $w={26}>
          <ScrollArrow aria-label="Scroll up"><Chevron up /></ScrollArrow>
          <Thumb $h={48} $before={368} />
          <ScrollArrow aria-label="Scroll down"><Chevron /></ScrollArrow>
        </ScrollTrack>
        <SideStrip $w={28} aria-label="Hide tools"><Pointer /></SideStrip>
        <Panel>
          <Search aria-label="Search tools" placeholder="Search 'Insert Page'" />
          <ToolList>
            <ToolRows>
              {tools.map((t) => (
                <li key={t.name}>
                  <ToolRow $open={t.open}>
                    {t.icon}
                    <ToolName>{t.name}</ToolName>
                    {t.open && (
                      <svg width="20" height="14" viewBox="0 0 20 14" fill="none" stroke="#000" strokeWidth="3" aria-hidden="true"><path d="M2 2.6 L10 10 L18 2.6" /></svg>
                    )}
                  </ToolRow>
                </li>
              ))}
            </ToolRows>
            <ScrollTrack $w={25}>
              <ScrollArrow aria-label="Scroll tools up"><Chevron up /></ScrollArrow>
              <Thumb $h={251} $before={0} />
              <ScrollArrow aria-label="Scroll tools down"><Chevron /></ScrollArrow>
            </ScrollTrack>
          </ToolList>
          <Promo>
            <PromoText>Convert, edit and e-sign PDF<br />forms &amp; agreements</PromoText>
            <Trial>Free 7-Day Trial</Trial>
          </Promo>
        </Panel>
      </Work>
      <Taskbar>
        <TaskButton aria-label="Start">
          <svg width="24" height="24" viewBox="0 0 24 24" fill="#fff"><path d="M0 3.4 L10 2 V11.4 H0Z M11.2 1.8 L24 0 V11.4 H11.2Z M0 12.6 H10 V22 L0 20.6Z M11.2 12.6 H24 V24 L11.2 22.2Z" /></svg>
        </TaskButton>
        <TaskSearch>
          <svg width="24" height="24" viewBox="0 0 24 24" fill="none" stroke="#111" strokeWidth="1.8"><circle cx="16" cy="8" r="7.2" /><path d="M11 13 L.6 23.4" /></svg>
          <TaskInput aria-label="Search" placeholder="Type here to search" />
          <SearchHighlight>
            <svg width="46" height="38" viewBox="0 0 46 38">
              <defs>
                <linearGradient id="caseTop" x1="0" x2="0" y1="0" y2="1"><stop offset="0" stopColor="#f59a07" /><stop offset="1" stopColor="#d27c05" /></linearGradient>
                <linearGradient id="caseLow" x1="0" x2="0" y1="0" y2="1"><stop offset="0" stopColor="#8e4d03" /><stop offset="1" stopColor="#b86d06" /></linearGradient>
              </defs>
              <path d="M16 7 V4 Q16 1.6 19 1.6 H27 Q30 1.6 30 4 V7" fill="none" stroke="#333" strokeWidth="3" />
              <rect y="20" width="46" height="18" rx="2" fill="url(#caseLow)" />
              <rect y="6.6" width="46" height="17" rx="2" fill="url(#caseTop)" />
              <rect x="19" y="19.6" width="8" height="8.4" fill="#ffd500" /><rect x="21.6" y="22" width="3" height="2.4" fill="#fff3a0" />
            </svg>
          </SearchHighlight>
        </TaskSearch>
        <TaskButton aria-label="Task view">
          <TrayIcon><path d="M1 0 V3.5 H15 V0 M1 7.5 H15 V17.5 H1Z M1 24 V20.5 H15 V24 M20.5 0 V6 M20.5 12 V24" /><path d="M19 7 h3 v3 h-3z" fill="#fff" stroke="none" /></TrayIcon>
        </TaskButton>
        <Apps>
          {pinned.map((p) => <Pinned key={p.name} aria-label={p.name} $bar={p.bar} $bg={p.bg} $full={p.full}>{p.icon}</Pinned>)}
        </Apps>
        <Tray>
          <News>
            <svg width="34" height="24" viewBox="0 0 34 24">
              <defs><linearGradient id="news" x1="0" x2="1"><stop offset="0" stopColor="#25a9c2" /><stop offset="1" stopColor="#3192e0" /></linearGradient></defs>
              <rect x="24" y="4" width="9" height="20" rx="2" fill="#1257a0" />
              <rect width="29" height="24" rx="3" fill="url(#news)" />
              <rect x="4" y="3" width="5" height="12" rx="1" fill="#fff" /><rect x="12" y="10" width="5" height="5" rx="1" fill="#fff" /><rect x="20" y="6" width="5" height="9" rx="1" fill="#fff" />
              <rect x="4" y="18" width="21" height="2" fill="#0fe0f5" />
            </svg>
            Top...
          </News>
          <TrayButton aria-label="Hidden icons"><TrayIcon w={18} h={12}><path d="M.6 10.6 L9 1.6 L17.4 10.6" /></TrayIcon></TrayButton>
          <TrayButton aria-label="OneDrive">
            <svg width="24" height="16" viewBox="0 0 24 16"><path d="M5 6 A7 7 0 0 1 18 5 L20 8 L8 12Z" fill="#0c64b8" /><path d="M4.6 5.4 A5.2 5.2 0 0 0 2 14.6 L14 9 Q9 4.6 4.6 5.4Z" fill="#1684d8" /><path d="M2 14.6 L13 8.6 Q15 7 19 7 A4.6 4.6 0 0 1 20 16 H5 Q3 16 2 14.6Z" fill="#28a4ea" /></svg>
          </TrayButton>
          <TrayButton aria-label="Battery"><TrayIcon h={14}><path d="M.8 .8 H21.4 V13.2 H.8Z M22.8 4.6 V9.4" /><rect x="2.6" y="2.6" width="10" height="8.8" fill="#fff" stroke="none" /></TrayIcon></TrayButton>
          <TrayButton aria-label="Network"><TrayIcon h={18}><path d="M6 1 H23.2 V13.6 H4 M8 17.2 H18 M13 13.6 V17 M.8 1 H6.6 V8 H.8Z M3.6 8 V18 M2.6 4 H5" /></TrayIcon></TrayButton>
          <TrayButton aria-label="Volume muted"><TrayIcon w={22} h={20}><path d="M1 7 H4 L9.6 1.4 V18.6 L4 13 H1Z M13 6.6 L20.6 14 M20.6 6.6 L13 14" /></TrayIcon></TrayButton>
          <Clock>09:16<br />18/07/2023</Clock>
          <TrayButton aria-label="Notifications"><TrayIcon w={26} h={26}><path d="M1 1.6 H25 V19.6 H16.6 L12.6 24 L8.6 19.6 H1Z" /></TrayIcon></TrayButton>
          <ShowDesktop aria-label="Show desktop" />
        </Tray>
      </Taskbar>
    </Desktop>
  );
}
